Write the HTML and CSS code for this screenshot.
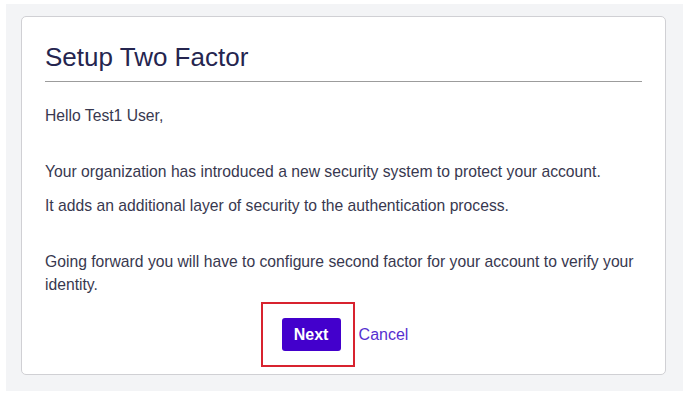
FILE: index.html
```html
<!DOCTYPE html>
<html>
<head>
<meta charset="utf-8">
<link rel="stylesheet" href="styles.css">
</head>
<body>
<div class="page">
  <div class="card">
    <h1 class="title">Setup Two Factor</h1>
    <hr class="rule">
    <p class="para gap-lg">Hello Test1 User,</p>
    <p class="para">Your organization has introduced a new security system to protect your account.</p>
    <p class="para gap-lg">It adds an additional layer of security to the authentication process.</p>
    <p class="para gap-sm">Going forward you will have to configure second factor for your account to verify your identity.</p>
    <div class="actions">
      <div class="highlight">
        <button class="btn-next" type="button">Next</button>
      </div>
      <a class="cancel" href="#">Cancel</a>
    </div>
  </div>
</div>
</body>
</html>
```

FILE: styles.css
```css
html, body {
  margin: 0;
  padding: 0;
  background: #ffffff;
}
body {
  font-family: "Liberation Sans", Arial, sans-serif;
  color: #38384f;
}
.page {
  margin: 4px 3px 10px 6px;
  background: #f3f4f6;
  padding: 12px 17px 16px 15px;
}
.card {
  background: #ffffff;
  border: 1px solid #d0d0d4;
  border-radius: 5px;
  padding: 22px 23px 7px 23px;
}
.title {
  margin: 0;
  font-size: 26px;
  font-weight: normal;
  line-height: 36px;
  color: #25254f;
}
.rule {
  margin: 6px 0 0 0;
  border: 0;
  border-top: 1px solid #9c9c9c;
  height: 0;
}
.para {
  margin: 22px 0 0 0;
  font-size: 15.7px;
  line-height: 23px;
}
.rule + .para {
  margin-top: 22px;
}
.para + .para {
  margin-top: 11px;
}
.gap-lg + .para {
  margin-top: 33px;
}
.actions {
  display: flex;
  justify-content: center;
  align-items: center;
  margin-top: 6px;
  padding-right: 18px;
}
.highlight {
  border: 2px solid #d8232f;
  padding: 14px 12px 14px 19px;
}
.btn-next {
  display: block;
  width: 59px;
  height: 33px;
  border: 0;
  border-radius: 3px;
  background: #4300cc;
  color: #ffffff;
  font-family: "Liberation Sans", Arial, sans-serif;
  font-size: 16px;
  font-weight: bold;
  padding: 0;
  cursor: pointer;
}
.cancel {
  margin-left: 4px;
  font-size: 16px;
  color: #5630d0;
  text-decoration: none;
}
```
